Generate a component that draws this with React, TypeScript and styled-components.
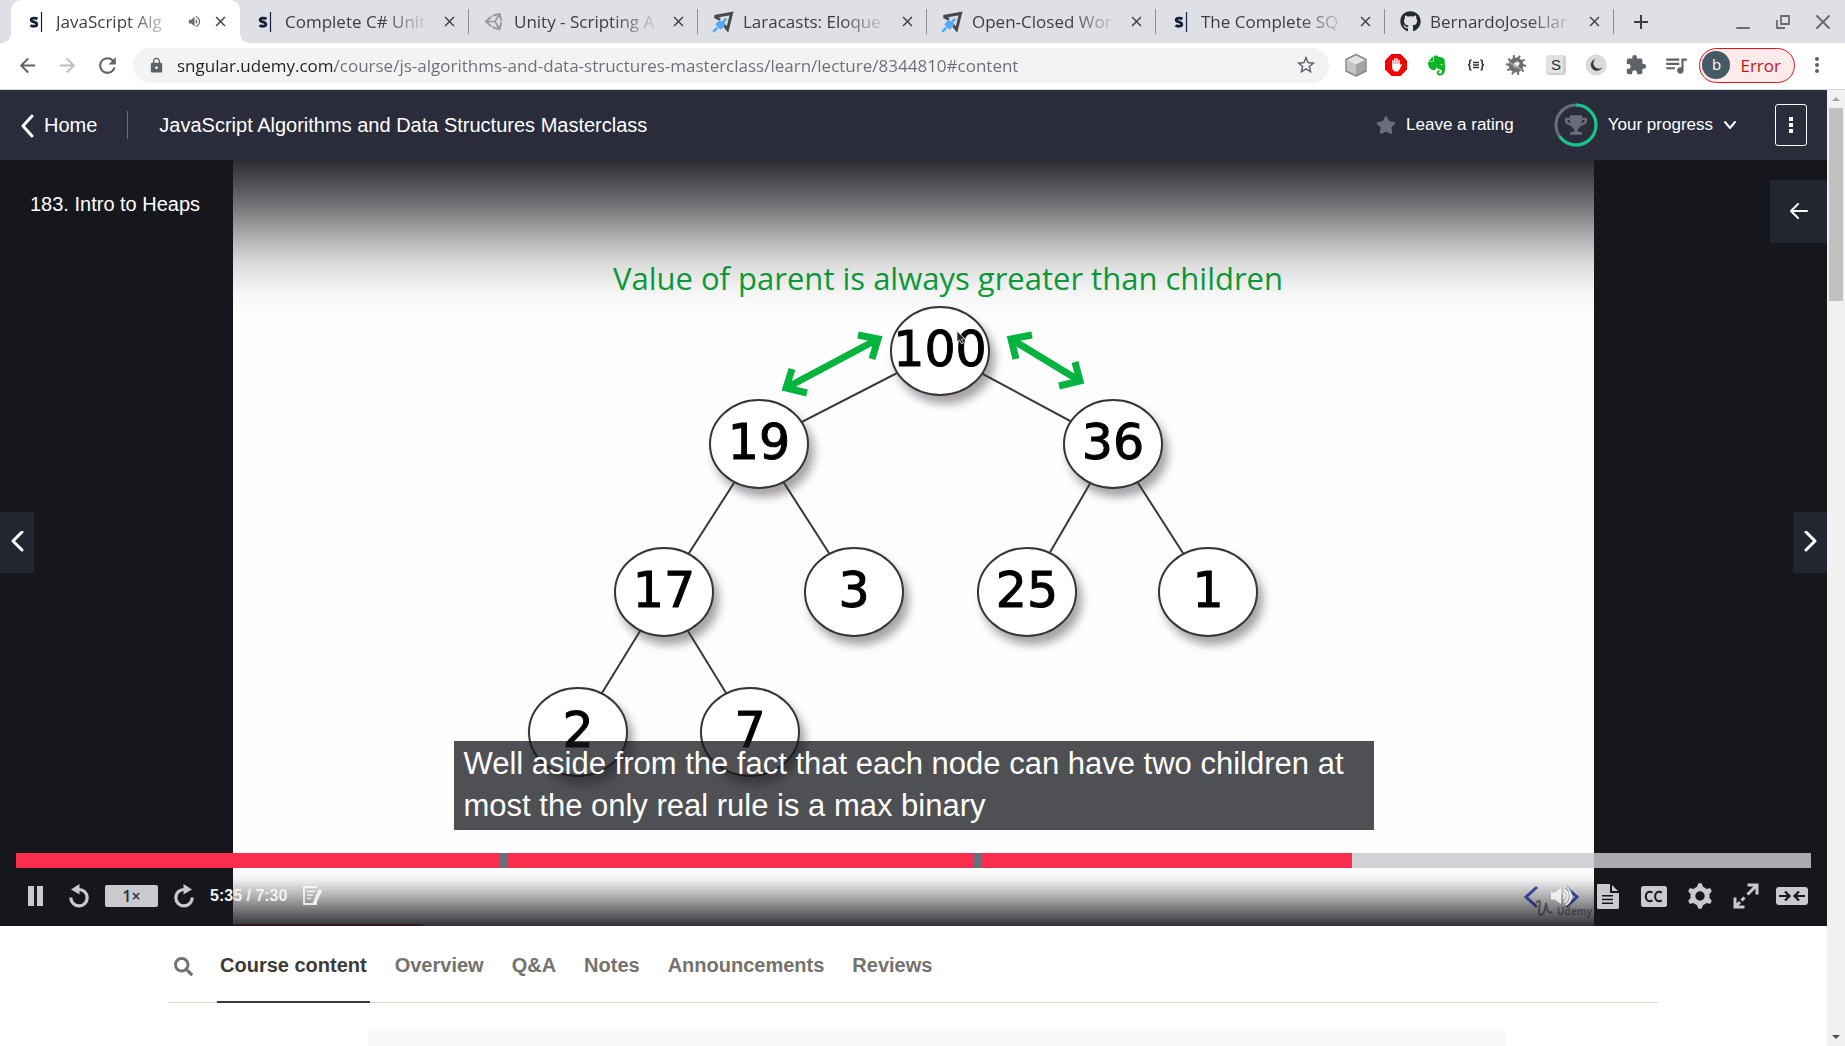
import React, { useState } from "react";
import styled, { createGlobalStyle, css } from "styled-components";
import {
  MdArrowBack,
  MdArrowForward,
  MdClose,
  MdExtension,
  MdAdd,
  MdLock,
  MdMoreVert,
  MdQueueMusic,
  MdRefresh,
  MdStarBorder,
  MdVolumeUp,
} from "react-icons/md";
import { FaEvernote, FaGithub, FaSearch, FaStar, FaTrophy, FaUnity } from "react-icons/fa";

const UI_FONT = '"Open Sans", "Noto Sans", sans-serif';
const PAGE_FONT = '"Liberation Sans", Arial, sans-serif';

const GlobalStyle = createGlobalStyle`
  *, *::before, *::after { box-sizing: border-box; }
  body { margin: 0; background: #fff; font-family: ${PAGE_FONT}; }
  button, input { font-family: inherit; margin: 0; padding: 0; border: 0; background: none; color: inherit; }
  button { cursor: pointer; display: inline-flex; align-items: center; justify-content: center; }
  a { color: inherit; text-decoration: none; }
  svg { display: block; flex: none; }
`;

const Window = styled.div`
  display: flex;
  flex-direction: column;
  height: 100vh;
  overflow: hidden;
`;

/* ---------- browser tabs ---------- */

const TabStrip = styled.div`
  display: flex;
  align-items: center;
  height: 43px;
  padding: 0 13px 0 11px;
  background: #dee0e5;
  font-family: ${UI_FONT};
`;

const BrowserTab = styled.div<{ $active?: boolean; $divider?: boolean }>`
  display: flex;
  align-items: center;
  flex: 0 1 229px;
  min-width: 0;
  height: 43px;
  padding: 0 12px 0 15px;
  gap: 10px;
  color: #3c4043;
  position: relative;
  ${(p) =>
    p.$active &&
    css`
      background: #fff;
      border-radius: 10px 10px 0 0;
      &::before,
      &::after {
        content: "";
        position: absolute;
        bottom: 0;
        width: 10px;
        height: 10px;
      }
      &::before {
        left: -10px;
        background: radial-gradient(circle at 0 0, transparent 10px, #fff 10px);
      }
      &::after {
        right: -10px;
        background: radial-gradient(circle at 100% 0, transparent 10px, #fff 10px);
      }
    `}
  ${(p) =>
    p.$divider &&
    css`
      background: linear-gradient(#8b8d92, #8b8d92) right center / 1px 25px no-repeat;
    `}
`;

const TabTitle = styled.a`
  flex: 1;
  min-width: 0;
  overflow: hidden;
  white-space: nowrap;
  font-size: 17px;
  line-height: 24px;
  mask-image: linear-gradient(90deg, #000 calc(100% - 48px), transparent);
`;

const Favicon = styled.span`
  display: flex;
  justify-content: center;
  flex: none;
  width: 20px;
`;

const SmallButton = styled.button`
  flex: none;
  width: 16px;
  height: 16px;
  color: #3c4043;
`;

const NewTab = styled.button`
  width: 24px;
  height: 24px;
  margin-left: 15px;
  color: #3c4043;
`;

const WindowButtons = styled.div`
  display: flex;
  gap: 22px;
  margin-left: auto;
  color: #6a6c70;
`;

const WindowButton = styled.button`
  width: 18px;
  height: 18px;
`;

/* ---------- address row ---------- */

const Toolbar = styled.div`
  display: flex;
  align-items: center;
  height: 47px;
  padding: 0 16px 2px 15px;
  background: #fff;
  border-bottom: 1px solid #d5dadd;
  font-family: ${UI_FONT};
`;

const NavButtons = styled.div`
  display: flex;
  gap: 16px;
  padding-right: 14px;
  color: #5f6368;
`;

const NavButton = styled.button`
  width: 24px;
  height: 24px;
  &:disabled {
    color: #bcbec1;
  }
`;

const AddressBar = styled.label`
  display: flex;
  align-items: center;
  flex: 1;
  height: 35px;
  padding: 0 15px;
  gap: 12px;
  border-radius: 18px;
  background: #f1f3f4;
  color: #5f6368;
`;

const AddressInput = styled.input`
  flex: 1;
  min-width: 0;
  height: 28px;
  font-size: 17px;
  color: transparent;
  background: linear-gradient(90deg, #202124 158px, #6b6e72 158px);
  background-clip: text;
  -webkit-background-clip: text;
  outline: none;
`;

const Extensions = styled.div`
  display: flex;
  align-items: center;
  gap: 16px;
  padding: 0 11px 0 15px;
  color: #5f6368;
`;

const ExtensionButton = styled.button`
  width: 24px;
  height: 24px;
`;

const ProfileButton = styled.button`
  height: 35px;
  padding: 0 13px 0 2px;
  gap: 10px;
  border: 1px solid #d8161f;
  border-radius: 18px;
  background: #fdeaea;
  color: #cd1219;
  font-size: 17px;
`;

const Avatar = styled.span`
  width: 28px;
  height: 28px;
  border-radius: 50%;
  background: #455a64;
  color: #fff;
  font-size: 15px;
  line-height: 27px;
`;

const MenuButton = styled.button`
  width: 24px;
  height: 24px;
  margin-left: 10px;
  color: #5f6368;
`;

/* ---------- page ---------- */

const Viewport = styled.div`
  display: flex;
  flex: 1;
  min-height: 0;
`;

const Page = styled.main`
  flex: 1;
  min-width: 0;
  overflow: hidden;
`;

const Scrollbar = styled.div`
  display: flex;
  flex-direction: column;
  align-items: center;
  justify-content: space-between;
  width: 18px;
  padding: 6px 0;
  background: #f1f1f1;
`;

const ScrollTop = styled.div`
  display: grid;
  gap: 6px;
  justify-items: center;
`;

const Thumb = styled.div`
  width: 14px;
  height: 193px;
  background: #c1c1c1;
`;

const CourseHeader = styled.header`
  display: flex;
  align-items: center;
  height: 70px;
  padding: 0 20px;
  background: #2a2c3b;
  color: #fff;
`;

const HomeLink = styled.a`
  display: flex;
  align-items: center;
  gap: 9px;
  padding-right: 30px;
  font-size: 20px;
  line-height: 28px;
`;

const CourseTitle = styled.h1`
  margin: 0;
  padding-left: 31px;
  border-left: 1px solid #6a6f73;
  font-size: 20px;
  font-weight: 400;
  line-height: 28px;
`;

const HeaderActions = styled.div`
  display: flex;
  align-items: center;
  margin-left: auto;
  gap: 36px;
`;

const HeaderButton = styled.button<{ $end?: number }>`
  gap: 10px;
  padding-right: ${(p) => p.$end ?? 0}px;
  font-size: 17px;
  line-height: 24px;
`;

const MoreButton = styled.button`
  width: 32px;
  height: 42px;
  border: 1px solid #fff;
  border-radius: 3px;
`;

/* ---------- player ---------- */

const Player = styled.section`
  position: relative;
  display: flex;
  justify-content: center;
  height: calc(100vh - 280px);
  min-height: 420px;
  background: #16171c;
  overflow: hidden;
`;

const SlideFrame = styled.div`
  position: relative;
  height: 100%;
  aspect-ratio: 1361 / 766;
  background: #fefefe;
  &::before,
  &::after {
    content: "";
    position: absolute;
    left: 0;
    right: 0;
  }
  &::before {
    top: 0;
    height: 156px;
    background: linear-gradient(
      rgba(20, 21, 26, 0.9),
      rgba(20, 21, 26, 0.63) 26%,
      rgba(20, 21, 26, 0.32) 51%,
      rgba(20, 21, 26, 0.15) 66%,
      rgba(20, 21, 26, 0.03) 86%,
      rgba(20, 21, 26, 0)
    );
  }
  &::after {
    bottom: 0;
    height: 58px;
    background: linear-gradient(
      rgba(20, 21, 26, 0),
      rgba(20, 21, 26, 0.06) 20%,
      rgba(20, 21, 26, 0.35) 50%,
      rgba(20, 21, 26, 0.88)
    );
  }
`;

const Slide = styled.svg`
  width: 100%;
  height: 100%;
`;

const LectureTitle = styled.h2`
  position: absolute;
  top: 30px;
  left: 30px;
  margin: 0;
  color: #fff;
  font-size: 20px;
  font-weight: 400;
  line-height: 28px;
`;

const ExpandButton = styled.button`
  position: absolute;
  top: 20px;
  right: 0;
  width: 57px;
  height: 63px;
  background: #222631;
  color: #fff;
`;

const SideButton = styled.button<{ $side: "left" | "right" }>`
  position: absolute;
  top: 352px;
  ${(p) => p.$side}: 0;
  width: 34px;
  height: 61px;
  background: #222631;
  color: #fff;
`;

const PlayerBottom = styled.div`
  position: absolute;
  left: 0;
  right: 0;
  bottom: 0;
  display: flex;
  flex-direction: column;
  align-items: center;
  padding: 0 16px;
`;

const Caption = styled.p`
  width: 920px;
  max-width: 100%;
  margin: 0 0 23px;
  padding: 2px 10px 3px;
  background: rgba(20, 21, 27, 0.75);
  color: #fff;
  font-size: 31px;
  line-height: 42px;
`;

const Timeline = styled.div`
  position: relative;
  width: 100%;
  height: 15px;
`;

const Scrubber = styled.input`
  display: block;
  width: 100%;
  height: 15px;
  appearance: none;
  cursor: pointer;
  &::-webkit-slider-thumb {
    appearance: none;
    width: 1px;
    height: 15px;
  }
`;

const Bookmark = styled.span`
  position: absolute;
  top: 0;
  width: 8px;
  height: 15px;
  background: #686f7a;
`;

const Controls = styled.div`
  display: flex;
  justify-content: space-between;
  align-items: center;
  width: 100%;
  height: 58px;
  padding: 0 1px 2px;
  color: #c9cace;
`;

const LeftControls = styled.div`
  display: flex;
  align-items: center;
  gap: 8px;
`;

const RightControls = styled.div`
  display: flex;
  align-items: center;
  gap: 10px;
`;

const ControlButton = styled.button<{ $bright?: boolean }>`
  width: 36px;
  height: 36px;
  color: ${(p) => (p.$bright ? "rgba(255, 255, 255, 0.8)" : "#c9cace")};
`;

const RateButton = styled.button`
  width: 53px;
  height: 22px;
  border-radius: 2px;
  background: #c9cace;
  color: #29303b;
  font-family: ${UI_FONT};
  font-size: 16px;
  font-weight: 600;
  line-height: 22px;
`;

const Clock = styled.span`
  color: #f2f2f4;
  font-size: 16px;
  font-weight: 700;
  line-height: 20px;
`;

/* ---------- below the player ---------- */

const SectionNav = styled.nav`
  display: flex;
  align-items: stretch;
  width: calc(100% - 338px);
  height: 77px;
  margin: 0 auto;
  padding-left: 4px;
  gap: 24px;
  box-shadow: inset 0 -1px #d9dbc8;
`;

const SearchButton = styled.button`
  width: 20px;
  padding-top: 3px;
  color: #73726c;
`;

const SectionTabs = styled.div`
  display: flex;
  gap: 22px;
`;

const SectionTab = styled.a<{ $active?: boolean }>`
  display: flex;
  align-items: center;
  padding: 4px 3px 0;
  border-bottom: 2px solid ${(p) => (p.$active ? "#3c3b37" : "transparent")};
  color: ${(p) => (p.$active ? "#3c3b37" : "#73726c")};
  font-size: 20px;
  font-weight: 700;
`;

const ContentPanel = styled.div`
  height: 120px;
  margin: 25px 322px 0 368px;
  background: #f7f8fa;
`;

/* ---------- drawings ---------- */

const SngularLogo = () => (
  <svg width="14" height="22" viewBox="0 0 14 22" fill="none" stroke="#14213a">
    <path d="M8.4 8C7 7 2.2 6.6 2.2 9c0 2.400 5.600 1.400 5.600 4.200 0 2.700-4.800 2.300-6.300 1.200" strokeWidth="2.800" />
    <path d="M12.500 1v20" strokeWidth="1.200" />
  </svg>
);

const LaracastsLogo = () => (
  <svg width="22" height="22" viewBox="0 0 22 22" fill="none">
    <path d="M2.500 5.500 19.500 2.500 15.500 18.500 11 13M2.500 5.500l5.500 3" stroke="#49494b" strokeWidth="3" />
    <path d="M13.500 8.500 6.500 15.500M4.500 17.500 2 20M8 10.500 5 13.500M11.500 14 8.500 17" stroke="#53aaf6" strokeWidth="2.600" strokeLinecap="round" />
  </svg>
);

const CubeIcon = () => (
  <svg width="24" height="24" viewBox="0 0 24 24" strokeLinejoin="round">
    <path d="M12 2 21.500 6.800v10.900L12 22.500 2.500 17.700V6.800z" fill="#c4c4c4" />
    <path d="M12 2 21.500 6.800 12 11.500 2.500 6.800z" fill="#e2e2e2" />
    <path d="M12 11.500 21.500 6.800v10.900L12 22.500z" fill="#a3a3a3" />
    <path d="M12 1.500 22 6.500v11.500L12 23 2 18V6.500z" fill="none" stroke="#858688" strokeWidth="1.500" />
  </svg>
);

const AdblockIcon = () => (
  <svg width="22" height="22" viewBox="0 0 22 22">
    <path d="M6.400 0h9.200L22 6.400v9.200L15.600 22H6.400L0 15.600V6.400z" fill="#f00505" />
    <path
      d="M7.900 12V6.800M9.900 11V4.800M12 11V4.800M14 12V6.500"
      stroke="#fff"
      strokeWidth="1.500"
      strokeLinecap="round"
    />
    <path d="M7.150 10h7.600v1.500l1-1.200c.7-.6 1.500 0 1.100.8l-2.500 4.600c-.8 1.300-1.700 1.800-3.200 1.800-2.600 0-4-1.800-4-4.500z" fill="#fff" />
  </svg>
);

const BracesIcon = () => (
  <svg width="20" height="14" viewBox="0 0 20 14" fill="none" stroke="#333" strokeWidth="1.600">
    <path d="M5.500 2C3.500 2 3.800 3 3.800 5S3 7 2 7c1 0 1.800 0 1.800 2s-.3 3 1.700 3M14.500 2c2 0 1.700 1 1.700 3S17 7 18 7c-1 0-1.800 0-1.800 2s.3 3-1.700 3" />
    <path d="M7 4.500h6M7 7h6M7 9.500h6" strokeWidth="1.300" />
  </svg>
);

const BugGearIcon = () => (
  <svg width="22" height="22" viewBox="0 0 22 22" fill="none" stroke="#6d6e70">
    <g strokeWidth="2">
      {[15, 51, 87, 123, 159, 195, 231, 267, 303, 339].map((angle) => (
        <path key={angle} d="M11 5 12.500 1" transform={`rotate(${angle} 11 11)`} />
      ))}
    </g>
    <circle cx="11" cy="11" r="5" strokeWidth="5" />
    <path d="M4.500 8.500l12 7" stroke="#a0a1a3" strokeWidth="1.500" />
    <circle cx="12.500" cy="9.500" r="2" fill="#ededed" stroke="none" />
  </svg>
);

const ScribeIcon = () => (
  <svg width="22" height="22" viewBox="0 0 22 22">
    <rect x="1" y="1" width="20" height="20" rx="3" fill="#e2e2e2" />
    <path d="M1 16l3 3h14V2h1l2 2v14l-3 3H4l-3-3z" fill="#cecece" />
    <text x="11" y="16" textAnchor="middle" fontFamily="Liberation Sans" fontSize="15" fill="#2f2f2f">
      S
    </text>
  </svg>
);

const MoonIcon = () => (
  <svg width="22" height="22" viewBox="0 0 22 22">
    <circle cx="11" cy="11" r="10.500" fill="#dadada" />
    <path d="M10.500 5a6 6 0 1 0 6.700 8.500A5 5 0 0 1 10.500 5z" fill="#3b3b3f" />
  </svg>
);

const Chevron = ({ d, w, h, size = 3 }: { d: string; w: number; h: number; size?: number }) => (
  <svg width={w} height={h} viewBox={`0 0 ${w} ${h}`} fill="none" stroke="currentColor" strokeWidth={size} strokeLinecap="round" strokeLinejoin="round">
    <path d={d} />
  </svg>
);

const ProgressRing = () => (
  <svg width="44" height="44" viewBox="0 0 44 44" fill="none" strokeWidth="3">
    <circle cx="22" cy="22" r="20" stroke="#686f7a" />
    <circle cx="22" cy="22" r="20" stroke="#0cc98b" pathLength="100" strokeDasharray="65 100" transform="rotate(-90 22 22)" />
    <FaTrophy x="11" y="11" width="22" height="21" size={22} color="#686f7a" />
  </svg>
);

const ReplayIcon = ({ flip }: { flip?: boolean }) => (
  <svg width="20" height="24" viewBox="0 0 20 24">
    <g transform={flip ? "translate(20) scale(-1 1)" : undefined}>
      <path d="M1.800 13.500A8.200 8.200 0 1 0 10 5.500" fill="none" stroke="currentColor" strokeWidth="3.200" />
      <path d="M2 5.500 10.500 0v10.500z" fill="currentColor" />
    </g>
  </svg>
);

const PauseIcon = () => (
  <svg width="15" height="20" viewBox="0 0 15 20" fill="currentColor">
    <path d="M0 0h6v20H0zM9 0h6v20H9z" />
  </svg>
);

const NoteIcon = () => (
  <svg width="20" height="20" viewBox="0 0 20 20" fill="none" stroke="currentColor">
    <path d="M14 1H1v17h12v-3" strokeWidth="1.800" />
    <path d="M4 5.500h8M4 9h6M4 12.500h4" strokeWidth="1.400" />
    <path d="M17.500 4 12 15.500l-.5 3" strokeWidth="3.600" />
  </svg>
);

const VolumeIcon = () => (
  <svg width="24" height="20" viewBox="0 0 24 20" fill="none" stroke="currentColor" strokeWidth="2">
    <path d="M1 6.500h4L11 2v16l-6-4.500H1z" fill="currentColor" stroke="none" />
    <path d="M13.500 7a4 4 0 0 1 0 6M14 3.500a7.500 7.500 0 0 1 0 13M15.500.8a10.500 10.500 0 0 1 0 18.400" />
  </svg>
);

const TranscriptIcon = () => (
  <svg width="22" height="25" viewBox="0 0 22 25" fill="currentColor">
    <path
      fillRule="evenodd"
      d="M1 0h12v9h9v14.500a1.500 1.500 0 0 1-1.500 1.500h-19A1.500 1.500 0 0 1 0 23.500V1a1 1 0 0 1 1-1zM5 11v1.600h11V11zm0 3.700v1.600h11v-1.600zm0 3.700V20h11v-1.600z"
    />
    <path d="M15 1l6 6h-6z" />
  </svg>
);

const CcIcon = () => (
  <svg width="26" height="21" viewBox="0 0 26 21">
    <rect width="26" height="21" rx="2.500" fill="currentColor" />
    <path d="M11.500 6.500c-4.500-2-6.700.6-6.700 4s2.200 6 6.700 4M20.800 6.500c-4.500-2-6.700.6-6.700 4s2.200 6 6.700 4" fill="none" stroke="#16171c" strokeWidth="2" />
  </svg>
);

const GearIcon = () => (
  <svg width="24" height="26" viewBox="0 0 24 26" fill="none" stroke="currentColor">
    <circle cx="12" cy="13" r="7.200" strokeWidth="5" />
    {[0, 60, 120, 180, 240, 300].map((angle) => (
      <path key={angle} d="M9.800 3.500 10.800 1h2.400l1 2.500z" fill="currentColor" strokeWidth="1.400" strokeLinejoin="round" transform={`rotate(${angle} 12 13)`} />
    ))}
  </svg>
);

const FullscreenIcon = () => (
  <svg width="26" height="26" viewBox="0 0 26 26" fill="none" stroke="currentColor" strokeWidth="3">
    <path d="M14.500 2h9.500v9.500M23 3l-8.500 8.500M2 14.500V24h9.500M3 23l4-4M8.500 17.500l3-3" />
  </svg>
);

const CollapseIcon = () => (
  <svg width="32" height="18" viewBox="0 0 32 18">
    <rect width="32" height="18" rx="3" fill="currentColor" />
    <path d="M3 9h10M9 4.500 13.500 9 9 13.500M29 9H19M23 4.500 18.500 9 23 13.500" fill="none" stroke="#16171c" strokeWidth="2.200" />
  </svg>
);

const RestoreIcon = () => (
  <svg width="14" height="14" viewBox="0 0 14 14" fill="none" stroke="currentColor" strokeWidth="1.800">
    <path d="M5 1h8v8H5zM1 5v8h8" />
  </svg>
);

/* ---------- heap diagram ---------- */

const NODES = [
  { value: 100, x: 707, y: 191 },
  { value: 19, x: 526, y: 284 },
  { value: 36, x: 880, y: 284 },
  { value: 17, x: 431, y: 432 },
  { value: 3, x: 621, y: 432 },
  { value: 25, x: 794, y: 432 },
  { value: 1, x: 975, y: 432 },
  { value: 2, x: 345, y: 572 },
  { value: 7, x: 517, y: 572 },
];

const NodeShape = styled.ellipse`
  fill: #fff;
  stroke: #38343a;
  stroke-width: 2px;
  filter: drop-shadow(5px 8px 5px rgba(60, 50, 60, 0.45));
`;

const NodeLabel = styled.text`
  font-family: "DejaVu Sans", sans-serif;
  font-size: 49px;
  text-anchor: middle;
  fill: #000;
  stroke: #000;
  stroke-width: 1px;
`;

const SlideHeading = styled.text`
  font-family: ${UI_FONT};
  font-size: 31px;
  text-anchor: middle;
  fill: #0aa43a;
`;

const Watermark = styled.text`
  font-family: ${UI_FONT};
  font-size: 10px;
  font-weight: 700;
  fill: #8a8a8e;
`;

const HeapSlide = () => (
  <Slide viewBox="0 0 1361 766">
    <SlideHeading x="715" y="130">
      Value of parent is always greater than children
    </SlideHeading>
    <g stroke="#3a373b" strokeWidth="2">
      {NODES.slice(1).map((node, i) => {
        const parent = NODES[Math.floor(i / 2)];
        return <line key={node.value} x1={parent.x} y1={parent.y} x2={node.x} y2={node.y} />;
      })}
    </g>
    {NODES.map((node) => (
      <g key={node.value}>
        <NodeShape cx={node.x} cy={node.y} rx="49" ry="44" />
        <NodeLabel x={node.x} y={node.y + 15}>
          {node.value}
        </NodeLabel>
      </g>
    ))}
    <g fill="none" stroke="#05b33f" strokeWidth="7">
      <path d="M553 228 645 179M625 175 645 179 639 199M559 209 553 228 574 233" />
      <path d="M778 179 847 221M799 175 778 179 783 199M842 202 847 221 826 226" />
    </g>
    <path d="M724 171v11l2.500-2 2 4 2-1-2-4h3.500z" fill="#222" stroke="#fff" strokeWidth="0.700" />
    <path d="M1304 727 1293 737l11 10M1333 727l11 10-11 10" fill="none" stroke="#3b55cc" strokeWidth="3" />
    <path d="M1303 743c3-3 4-3 4 0s-3 12 1 12 4-8 5-11-1 11 6 8" fill="none" stroke="#85858a" strokeWidth="2" />
    <Watermark x="1324" y="755">
      Udemy
    </Watermark>
    <path d="M0 764h190v2H0z" fill="#e0244a" />
  </Slide>
);

/* ---------- data ---------- */

const TABS = [
  { title: "JavaScript Alg", icon: <SngularLogo />, playing: true },
  { title: "Complete C# Unit", icon: <SngularLogo /> },
  { title: "Unity - Scripting A", icon: <FaUnity size={21} color="#96979a" /> },
  { title: "Laracasts: Eloque", icon: <LaracastsLogo /> },
  { title: "Open-Closed Wor", icon: <LaracastsLogo /> },
  { title: "The Complete SQ", icon: <SngularLogo /> },
  { title: "BernardoJoseLlar", icon: <FaGithub size={21} color="#24292e" /> },
];

const EXTENSIONS = [
  { name: "Cube", icon: <CubeIcon /> },
  { name: "Ad blocker", icon: <AdblockIcon /> },
  { name: "Evernote", icon: <FaEvernote size={23} color="#0cb526" /> },
  { name: "JSON formatter", icon: <BracesIcon /> },
  { name: "Debugger", icon: <BugGearIcon /> },
  { name: "Snippets", icon: <ScribeIcon /> },
  { name: "Dark mode", icon: <MoonIcon /> },
  { name: "Extensions", icon: <MdExtension size={22} /> },
  { name: "Media", icon: <MdQueueMusic size={26} /> },
];

const SECTIONS = ["Course content", "Overview", "Q&A", "Notes", "Announcements", "Reviews"];

const DURATION = 450;
const BOOKMARKS = [121, 240];

const clock = (s: number) => `${Math.floor(s / 60)}:${String(s % 60).padStart(2, "0")}`;

export default function App() {
  const [url, setUrl] = useState(
    "sngular.udemy.com/course/js-algorithms-and-data-structures-masterclass/learn/lecture/8344810#content"
  );
  const [time, setTime] = useState(335);
  const [section, setSection] = useState(SECTIONS[0]);
  const played = (time / DURATION) * 100;

  return (
    <Window>
      <GlobalStyle />
      <TabStrip>
        {TABS.map((tab, i) => (
          <BrowserTab key={tab.title} $active={i === 0} $divider={i > 0}>
            <Favicon>{tab.icon}</Favicon>
            <TabTitle href="#">{tab.title}</TabTitle>
            {tab.playing && (
              <SmallButton aria-label="Mute tab">
                <MdVolumeUp size={15} color="#6a6c70" />
              </SmallButton>
            )}
            <SmallButton aria-label="Close tab">
              <MdClose size={17} />
            </SmallButton>
          </BrowserTab>
        ))}
        <NewTab aria-label="New tab">
          <MdAdd size={24} />
        </NewTab>
        <WindowButtons>
          <WindowButton aria-label="Minimise">
            <Chevron d="M2 14h12" w={16} h={16} size={2} />
          </WindowButton>
          <WindowButton aria-label="Restore">
            <RestoreIcon />
          </WindowButton>
          <WindowButton aria-label="Close window">
            <Chevron d="M2 2l12 12M14 2 2 14" w={16} h={16} size={2} />
          </WindowButton>
        </WindowButtons>
      </TabStrip>

      <Toolbar>
        <NavButtons>
          <NavButton aria-label="Back">
            <MdArrowBack size={23} />
          </NavButton>
          <NavButton aria-label="Forward" disabled>
            <MdArrowForward size={23} />
          </NavButton>
          <NavButton aria-label="Reload">
            <MdRefresh size={25} />
          </NavButton>
        </NavButtons>
        <AddressBar>
          <MdLock size={17} />
          <AddressInput aria-label="Address" value={url} onChange={(e) => setUrl(e.target.value)} />
          <SmallButton aria-label="Bookmark page">
            <MdStarBorder size={22} color="#5f6368" />
          </SmallButton>
        </AddressBar>
        <Extensions>
          {EXTENSIONS.map((item) => (
            <ExtensionButton key={item.name} aria-label={item.name}>
              {item.icon}
            </ExtensionButton>
          ))}
        </Extensions>
        <ProfileButton>
          <Avatar>b</Avatar>
          Error
        </ProfileButton>
        <MenuButton aria-label="Browser menu">
          <MdMoreVert size={24} />
        </MenuButton>
      </Toolbar>

      <Viewport>
        <Page>
          <CourseHeader>
            <HomeLink href="#">
              <Chevron d="M12 4 3 14l9 10" w={15} h={26} />
              Home
            </HomeLink>
            <CourseTitle>JavaScript Algorithms and Data Structures Masterclass</CourseTitle>
            <HeaderActions>
              <HeaderButton $end={4}>
                <FaStar size={20} color="#686f7a" />
                Leave a rating
              </HeaderButton>
              <HeaderButton>
                <ProgressRing />
                Your progress
                <Chevron d="M2 3l5 6 5-6" w={16} h={12} size={2} />
              </HeaderButton>
              <MoreButton aria-label="More options">
                <svg width="4" height="16" viewBox="0 0 4 16" fill="#fff">
                  <path d="M0 0h4v4H0zM0 6h4v4H0zM0 12h4v4H0z" />
                </svg>
              </MoreButton>
            </HeaderActions>
          </CourseHeader>

          <Player>
            <SlideFrame>
              <HeapSlide />
            </SlideFrame>
            <LectureTitle>183. Intro to Heaps</LectureTitle>
            <ExpandButton aria-label="Show course content">
              <Chevron d="M18 8H2M9 1 2 8l7 7" w={20} h={18} size={2} />
            </ExpandButton>
            <SideButton $side="left" aria-label="Previous lecture">
              <Chevron d="M12 1 3 10l9 9" w={15} h={24} size={3} />
            </SideButton>
            <SideButton $side="right" aria-label="Next lecture">
              <Chevron d="M3 1l9 9-9 9" w={15} h={24} size={3} />
            </SideButton>
            <PlayerBottom>
              <Caption>Well aside from the fact that each node can have two children at most the only real rule is a max binary</Caption>
              <Timeline>
                <Scrubber
                  type="range"
                  aria-label="Seek"
                  min={0}
                  max={DURATION}
                  value={time}
                  onChange={(e) => setTime(Number(e.target.value))}
                  style={{
                    background: `linear-gradient(90deg, #fa2d4c ${played}%, rgba(200, 201, 205, 0.83) ${played}%)`,
                  }}
                />
                {BOOKMARKS.map((mark) => (
                  <Bookmark key={mark} style={{ left: `${(mark / DURATION) * 100}%` }} />
                ))}
              </Timeline>
              <Controls>
                <LeftControls>
                  <ControlButton aria-label="Pause">
                    <PauseIcon />
                  </ControlButton>
                  <ControlButton aria-label="Rewind">
                    <ReplayIcon />
                  </ControlButton>
                  <RateButton>1×</RateButton>
                  <ControlButton aria-label="Forward">
                    <ReplayIcon flip />
                  </ControlButton>
                  <Clock>
                    {clock(time)} / {clock(DURATION)}
                  </Clock>
                  <ControlButton aria-label="Add note" $bright>
                    <NoteIcon />
                  </ControlButton>
                </LeftControls>
                <RightControls>
                  <ControlButton aria-label="Volume" $bright>
                    <VolumeIcon />
                  </ControlButton>
                  <ControlButton aria-label="Transcript">
                    <TranscriptIcon />
                  </ControlButton>
                  <ControlButton aria-label="Captions">
                    <CcIcon />
                  </ControlButton>
                  <ControlButton aria-label="Settings">
                    <GearIcon />
                  </ControlButton>
                  <ControlButton aria-label="Full screen">
                    <FullscreenIcon />
                  </ControlButton>
                  <ControlButton aria-label="Collapse view">
                    <CollapseIcon />
                  </ControlButton>
                </RightControls>
              </Controls>
            </PlayerBottom>
          </Player>

          <SectionNav>
            <SearchButton aria-label="Search course">
              <FaSearch size={19} />
            </SearchButton>
            <SectionTabs>
              {SECTIONS.map((name) => (
                <SectionTab key={name} href="#" $active={name === section} onClick={() => setSection(name)}>
                  {name}
                </SectionTab>
              ))}
            </SectionTabs>
          </SectionNav>
          <ContentPanel />
        </Page>
        <Scrollbar>
          <ScrollTop>
            <svg width="8" height="6" viewBox="0 0 8 6" fill="#a3a3a3">
              <path d="M4 1l4 4H0z" />
            </svg>
            <Thumb />
          </ScrollTop>
          <svg width="8" height="6" viewBox="0 0 8 6" fill="#505050">
            <path d="M0 1h8L4 5z" />
          </svg>
        </Scrollbar>
      </Viewport>
    </Window>
  );
}
